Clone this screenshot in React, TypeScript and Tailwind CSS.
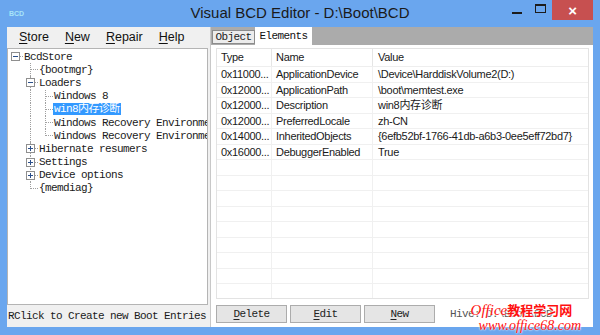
import type { ReactNode } from "react";

const mono = { fontFamily: '"Liberation Mono", "Noto Sans CJK SC", monospace' };
const ui = { fontFamily: '"Liberation Sans", "Noto Sans CJK SC", sans-serif' };

type TreeRow = {
  text: string;
  level: number;
  last: boolean;
  pass: boolean[];
  box?: "+" | "-";
  selected?: boolean;
};

const treeRows: TreeRow[] = [
  { text: "BcdStore", level: 0, last: true, pass: [], box: "-" },
  { text: "{bootmgr}", level: 1, last: false, pass: [false] },
  { text: "Loaders", level: 1, last: false, pass: [false], box: "-" },
  { text: "Windows 8", level: 2, last: false, pass: [false, true] },
  { text: "win8内存诊断", level: 2, last: false, pass: [false, true], selected: true },
  { text: "Windows Recovery Environment", level: 2, last: false, pass: [false, true] },
  { text: "Windows Recovery Environment", level: 2, last: true, pass: [false, true] },
  { text: "Hibernate resumers", level: 1, last: false, pass: [false], box: "+" },
  { text: "Settings", level: 1, last: false, pass: [false], box: "+" },
  { text: "Device options", level: 1, last: false, pass: [false], box: "+" },
  { text: "{memdiag}", level: 1, last: true, pass: [false] },
];

const elements = [
  ["0x11000...", "ApplicationDevice", "\\Device\\HarddiskVolume2(D:)"],
  ["0x12000...", "ApplicationPath", "\\boot\\memtest.exe"],
  ["0x12000...", "Description", "win8内存诊断"],
  ["0x12000...", "PreferredLocale", "zh-CN"],
  ["0x14000...", "InheritedObjects", "{6efb52bf-1766-41db-a6b3-0ee5eff72bd7}"],
  ["0x16000...", "DebuggerEnabled", "True"],
];

function Ul({ c, rest }: { c: string; rest: string }) {
  return (
    <span>
      <span className="underline underline-offset-2">{c}</span>
      {rest}
    </span>
  );
}

function Gutter({ row }: { row: TreeRow }) {
  const cells: ReactNode[] = row.pass.map((p, i) => (
    <div key={i} className="relative h-full w-[15px] shrink-0">
      {p ? <div className="absolute left-[7px] top-0 bottom-0 border-l border-dotted border-[#a0a0a0]" /> : null}
    </div>
  ));
  const isRoot = row.level === 0;
  cells.push(
    <div key="own" className="relative h-full w-[15px] shrink-0">
      {!isRoot ? (
        <div
          className={`absolute left-[7px] top-0 border-l border-dotted border-[#a0a0a0] ${row.last ? "h-[7px]" : "bottom-0"}`}
        />
      ) : null}
      <div className="absolute left-[7px] right-0 top-[6px] border-t border-dotted border-[#a0a0a0]" />
      {row.box ? (
        <div className="absolute left-[3px] top-[2px] flex h-[9px] w-[9px] items-center justify-center border border-[#8f8f8f] bg-white">
          <div className="relative h-[5px] w-[5px]">
            <div className="absolute left-0 right-0 top-[2px] h-px bg-[#2b4f8a]" />
            {row.box === "+" ? <div className="absolute top-0 bottom-0 left-[2px] w-px bg-[#2b4f8a]" /> : null}
          </div>
        </div>
      ) : null}
    </div>
  );
  return <>{cells}</>;
}

export default function App() {
  return (
    <div className="flex h-[335px] w-[600px] flex-col overflow-hidden bg-[#6aa6ee]" style={ui}>
      {/* title bar */}
      <div className="flex h-[27px] shrink-0 items-start">
        <div className="flex h-full w-[95px] items-center pl-[9px]">
          <span className="text-[7px] font-bold leading-none text-[#a8e4f8]">BCD</span>
        </div>
        <div className="flex h-full flex-1 items-center justify-center pb-[1px] text-[15px] text-[#1a1a1a]">
          Visual BCD Editor - D:\Boot\BCD
        </div>
        <div className="flex h-[20px] w-[95px] items-start justify-end pr-[7px]">
          <div className="flex h-[20px] w-[24px] items-center justify-center">
            <div className="mt-[6px] h-[2px] w-[10px] bg-[#1c1c1c]" />
          </div>
          <div className="flex h-[20px] w-[24px] items-center justify-center">
            <div className="mb-[3px] h-[9px] w-[11px] border border-t-2 border-[#1c1c1c]" />
          </div>
          <div className="flex h-[20px] w-[41px] items-center justify-center bg-[#c75050] text-[15px] font-bold leading-none text-white">
            ×
          </div>
        </div>
      </div>

      {/* body */}
      <div className="flex min-h-0 flex-1 bg-[#f0f0f0] mx-[7px] mb-[8px]">
        {/* left column */}
        <div className="flex w-[201px] shrink-0 flex-col">
          <div className="flex h-[21px] items-center gap-[16px] pl-[12px] text-[12.5px] text-[#111]">
            <Ul c="S" rest="tore" />
            <Ul c="N" rest="ew" />
            <Ul c="R" rest="epair" />
            <Ul c="H" rest="elp" />
          </div>
          <div className="flex min-h-0 flex-1 flex-col overflow-hidden border border-[#b4b4b4] bg-white pt-[1px]" style={mono}>
            {treeRows.map((row, i) => (
              <div key={i} className="flex h-[13.2px] shrink-0 items-stretch whitespace-nowrap">
                <Gutter row={row} />
                <div className="flex items-center">
                  <span
                    className={`px-px text-[11px] leading-[12px] tracking-[-0.6px] ${row.selected ? "bg-[#3399ff] text-white" : "text-[#1a1a1a]"}`}
                  >
                    {row.text}
                  </span>
                </div>
              </div>
            ))}
          </div>
          <div className="flex h-[22px] items-center whitespace-nowrap pl-[1px] text-[11px] tracking-[-0.6px] text-[#1a1a1a]" style={mono}>
            RClick to Create new Boot Entries
          </div>
        </div>

        {/* splitter */}
        <div className="w-[3px] shrink-0 border-r border-[#c8c8c8]" />

        {/* right column */}
        <div className="relative flex min-w-0 flex-1 flex-col">
          <div className="flex h-[18px] shrink-0 items-end bg-[#ababab] pl-[1px]" style={mono}>
            <div className="mb-[1px] flex h-[14px] w-[43px] items-center justify-center border border-[#8c8c8c] bg-[#ececec] text-[11px] tracking-[-0.6px] text-[#222]">
              Object
            </div>
            <div className="flex h-[18px] w-[57px] items-center justify-center bg-white text-[11px] tracking-[-0.6px] text-[#111]">
              Elements
            </div>
          </div>
          <div className="flex min-h-0 flex-1 flex-col bg-white pl-[5px] pr-[4px] pt-[3px] pb-[4px]">
            <div className="flex h-[251px] flex-col overflow-hidden border border-[#e3e3e3] text-[11px] tracking-[-0.3px] text-[#1a1a1a]">
              <div className="flex h-[18px] shrink-0 border-b border-[#eeeeee]">
                <div className="flex w-[55px] shrink-0 items-center border-r border-[#e5e5e5] pl-[4px]">Type</div>
                <div className="flex w-[101px] shrink-0 items-center border-r border-[#e5e5e5] pl-[4px]">Name</div>
                <div className="flex flex-1 items-center pl-[5px]">Value</div>
              </div>
              {Array.from({ length: 15 }).map((_, i) => {
                const r = elements[i];
                return (
                  <div key={i} className="flex h-[15.5px] shrink-0 border-b border-[#f0f0f0] whitespace-nowrap">
                    <div className="flex w-[55px] shrink-0 items-center overflow-hidden border-r border-[#f0f0f0] pl-[4px]">{r ? r[0] : ""}</div>
                    <div className="flex w-[101px] shrink-0 items-center overflow-hidden border-r border-[#f0f0f0] pl-[4px]">{r ? r[1] : ""}</div>
                    <div className="flex flex-1 items-center overflow-hidden pl-[5px]">{r ? r[2] : ""}</div>
                  </div>
                );
              })}
            </div>
            <div className="mt-[6px] flex h-[18px] items-center gap-[3px] text-[11px] tracking-[-0.6px] text-[#222]" style={mono}>
              <div className="flex h-[18px] w-[71px] items-center justify-center border border-[#acacac] bg-[#e5e5e5]">
                <Ul c="D" rest="elete" />
              </div>
              <div className="flex h-[18px] w-[71px] items-center justify-center border border-[#acacac] bg-[#e5e5e5]">
                <Ul c="E" rest="dit" />
              </div>
              <div className="flex h-[18px] w-[71px] items-center justify-center border border-[#acacac] bg-[#e5e5e5]">
                <Ul c="N" rest="ew" />
              </div>
              <span className="ml-[12px] whitespace-nowrap text-[#555]">Hive: D:\Boot\BCD</span>
            </div>
          </div>

          {/* watermark */}
          <div className="pointer-events-none absolute right-[12px] bottom-[-6px] flex flex-col items-start leading-none text-[#ff1010] [text-shadow:0_0_2px_#fff,0_0_2px_#fff]">
            <span className="text-[15px] italic" style={{ fontFamily: '"Liberation Serif", "Noto Sans CJK SC", serif' }}>
              Office<span style={{ fontFamily: '"Noto Sans CJK SC", sans-serif' }} className="text-[13px] not-italic font-bold">教程学习网</span>
            </span>
            <span className="ml-[8px] mt-[1px] text-[14px] italic" style={{ fontFamily: '"Liberation Serif", serif' }}>
              www.office68.com
            </span>
          </div>
        </div>
      </div>
    </div>
  );
}
